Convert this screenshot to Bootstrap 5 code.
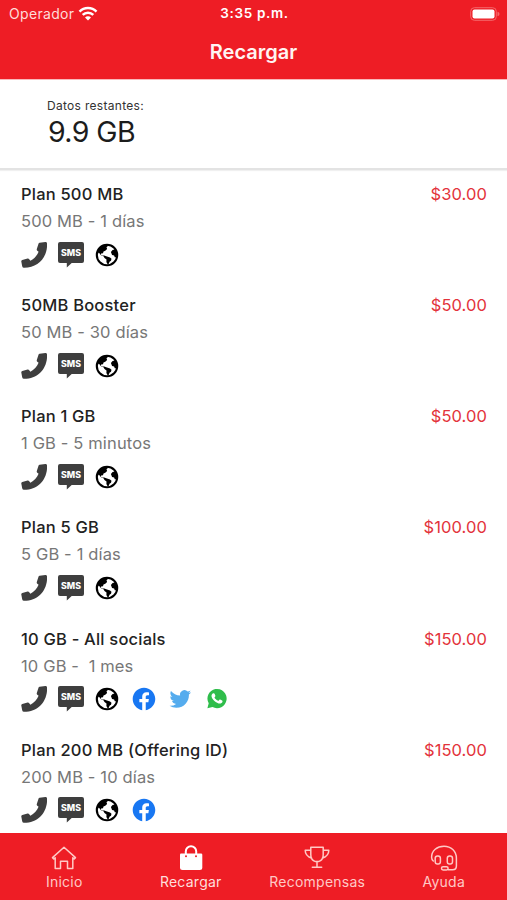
<!DOCTYPE html>
<html lang="es">
<head>
<meta charset="utf-8">
<meta name="viewport" content="width=device-width, initial-scale=1">
<title>Recargar</title>
<link href="https://cdn.jsdelivr.net/npm/bootstrap@5.3.0/dist/css/bootstrap.min.css" rel="stylesheet">
<style>
  body { font-family: Inter, "Liberation Sans", sans-serif; color: #222; height: 900px; overflow: hidden; background: #fff; }
  .brand-red { background: #ee1d25; }
  .top-area { height: 79px; box-shadow: 0 1px 0 #f9b9bb; }
  .status-row { height: 27px; font-size: 14px; padding: 0 7px 0 9px; }
  .status-row > * { flex: 1 1 0; }
  .operator { color: #ffdcd9; letter-spacing: .32px; }
  .clock { font-weight: 600; letter-spacing: .65px; font-size: 13.5px; }
  .page-title { font-size: 20px; font-weight: 600; line-height: 51px; letter-spacing: 0; color: #fff4f2; }
  .balance { height: 91px; padding: 20px 48px 0 47px; border-bottom: 2px solid #e3e3e3; box-shadow: 0 1px 1px #f0f0f0; }
  .balance-label { font-size: 12px; line-height: 14px; letter-spacing: .3px; color: #333; }
  .balance-value { font-size: 28.5px; line-height: 37px; letter-spacing: -.6px; color: #1c1c1c; padding-left: 1px; }
  .plans { height: 663px; padding-top: 11px; }
  .plan { height: 111.15px; padding: 0 20px 0 21px; }
  .plan-name, .plan-price, .plan-info { font-size: 16.5px; line-height: 27px; }
  .plan-name { font-weight: 500; letter-spacing: .2px; }
  .plan-price { color: #e3333b; letter-spacing: .08px; }
  .plan-info { color: #777; letter-spacing: .14px; white-space: pre; }
  .services { height: 39px; }
  .services svg { width: 26px; height: 26px; margin-right: 10.6px; }
  .tabs { height: 67px; padding: 10px 0 0 1px; }
  .tab { flex: 1 1 0; color: #ffc9c5; font-size: 14px; line-height: 18px; letter-spacing: .25px; text-decoration: none; }
  .tab svg { width: 30px; height: 30px; }
  .tab.current { color: #fff; }
  .tab.current span { color: #ffdfdc; }
</style>
</head>
<body>
<svg width="0" height="0" class="d-none" aria-hidden="true">
  <symbol id="phone" viewBox="0 0 26 26"><path fill="#3e3e3e" d="M18.600.8L24.400 0q1.500-.1 1.700 1.800C26.400 15.500 17 25.900 3 25.800q-1.500 0-1.800-1.500L.3 19.500q-.2-1.300 1-1.600l5.300-1.300q1-.2 1.600.6l1.200 1.500c3.600-1.800 6.600-5 8.200-8.900l-1.300-1.100q-.8-.7-.5-1.700l1.700-5.200q.3-.9 1.100-1z"/></symbol>
  <symbol id="sms" viewBox="0 0 26 26"><path fill="#3e3e3e" d="M2 0h22a2 2 0 0 1 2 2v17a2 2 0 0 1-2 2H13.700L8.800 25.400V21H2a2 2 0 0 1-2-2V2a2 2 0 0 1 2-2z"/><text x="3" y="13.500" textLength="20" lengthAdjust="spacingAndGlyphs" font-family="Inter, sans-serif" font-weight="800" font-size="8.800" fill="#fff">SMS</text></symbol>
  <symbol id="globe" viewBox="0 0 26 26"><circle cx="13" cy="13" r="10.200" fill="#fff" stroke="#000" stroke-width="2.100"/><path d="M3.200 9.500L6 5l3.500-2.200 3.500-.3 1.200 1.200-1.700 1.500.6 1.700-1.800 1.800-1.800.9-.5 1.700-1.900.3-.2 1.200 1.500.8 1.800-.2L13 14.500l3 .9 1.500 1.300-.5 2-1.500 1.100-.7 2-1.200.5-1.200-2.300.1-2.500-2-1.500-1-1.700-2.500-1-1.800-2.300-1.800-.5zM16.900 10l1.700-2 2.200-.5 1.500 1.500.6 3.500-.6 2.600-1.500.2-.7-1.900-2-.5z"/></symbol>
  <symbol id="facebook" viewBox="-1 -1.200 26 26"><circle cx="12" cy="12" r="10.500" fill="#fff"/><path fill="#1877f2" transform="translate(.7 .5) scale(.94)" d="M24 12.073c0-6.627-5.373-12-12-12s-12 5.373-12 12c0 5.990 4.388 10.954 10.125 11.854v-8.385H7.078v-3.470h3.047V9.430c0-3.007 1.792-4.669 4.533-4.669 1.312 0 2.686.235 2.686.235v2.953H15.830c-1.491 0-1.956.925-1.956 1.874v2.250h3.328l-.532 3.470h-2.796v8.385C19.612 23.027 24 18.062 24 12.073z"/></symbol>
  <symbol id="twitter" viewBox="-1.500 -1.500 28 28"><path fill="#55acee" transform="translate(1.200 .8) scale(.97)" d="M23.953 4.570a10 10 0 0 1-2.825.775 4.958 4.958 0 0 0 2.163-2.723c-.951.555-2.005.959-3.127 1.184a4.920 4.920 0 0 0-8.384 4.482C7.690 8.095 4.067 6.130 1.640 3.162a4.822 4.822 0 0 0-.666 2.475c0 1.710.870 3.213 2.188 4.096a4.904 4.904 0 0 1-2.228-.616v.06a4.923 4.923 0 0 0 3.946 4.827 4.996 4.996 0 0 1-2.212.085 4.936 4.936 0 0 0 4.604 3.417 9.867 9.867 0 0 1-6.102 2.105c-.39 0-.779-.023-1.170-.067a13.995 13.995 0 0 0 7.557 2.209c9.053 0 13.998-7.496 13.998-13.985 0-.21 0-.42-.015-.63A9.935 9.935 0 0 0 23.953 4.570z"/></symbol>
  <symbol id="whatsapp" viewBox="0 0 26 26"><path fill="#2fbd4b" d="M3.400 22.200l1.300-4.900A9.600 9.600 0 1 1 8.500 21z"/><path fill="#fff" d="M9.500 7.300c.6-.1.900 0 1.200.7l.7 1.700c.1.400 0 .7-.9 1.700-.1.300.2.700.8 1.400.9 1 1.800 1.600 2.800 2 .3.100.5 0 1.300-1.100.2-.3.500-.3.800-.2l1.900.9c.5.300.5.400.4 1-.2 1.400-1.500 2-2.700 2.100-1.500 0-3.700-.9-5.600-2.800-1.700-1.700-2.700-3.400-2.700-4.800 0-1.200.8-2.400 2-2.600z"/></symbol>
</svg>

<div class="d-flex flex-column h-100">
  <header class="top-area brand-red text-white flex-shrink-0 position-relative">
    <div class="status-row d-flex align-items-center">
      <div class="operator d-flex align-items-center">Operador
        <svg class="ms-1" width="20" height="16" viewBox="0 0 20 16" fill="none" stroke="#fff" stroke-width="2.500"><path d="M1.500 5.600a12 12 0 0 1 17 0M4.700 8.900a7.500 7.500 0 0 1 10.600 0"/><path d="M7 11.400a4.200 4.200 0 0 1 6 0L10 14.500z" fill="#fff" stroke="none"/></svg>
      </div>
      <div class="clock text-center text-nowrap">3:35 p.m.</div>
      <div class="text-end d-flex justify-content-end">
        <svg width="30" height="14" viewBox="0 0 30 14"><rect x=".7" y=".7" width="25.600" height="12.600" rx="3.700" fill="none" stroke="#f4686b" stroke-width="1"/><rect x="2.500" y="2.500" width="22" height="9" rx="2" fill="#fff"/><path d="M27.500 4.800q2 .5 2 2.200t-2 2.200z" fill="#f4686b"/></svg>
      </div>
    </div>
    <h1 class="page-title text-center m-0">Recargar</h1>
  </header>

  <section class="balance flex-shrink-0">
    <div class="balance-label">Datos restantes:</div>
    <div class="balance-value">9.9 GB</div>
  </section>

  <main class="plans overflow-hidden flex-shrink-0">
    <article class="plan">
      <div class="d-flex justify-content-between"><div class="plan-name">Plan 500 MB</div><div class="plan-price">$30.00</div></div>
      <div class="plan-info">500 MB - 1 días</div>
      <div class="services d-flex align-items-center"><svg><use href="#phone"/></svg><svg><use href="#sms"/></svg><svg><use href="#globe"/></svg></div>
    </article>
    <article class="plan">
      <div class="d-flex justify-content-between"><div class="plan-name">50MB Booster</div><div class="plan-price">$50.00</div></div>
      <div class="plan-info">50 MB - 30 días</div>
      <div class="services d-flex align-items-center"><svg><use href="#phone"/></svg><svg><use href="#sms"/></svg><svg><use href="#globe"/></svg></div>
    </article>
    <article class="plan">
      <div class="d-flex justify-content-between"><div class="plan-name">Plan 1 GB</div><div class="plan-price">$50.00</div></div>
      <div class="plan-info">1 GB - 5 minutos</div>
      <div class="services d-flex align-items-center"><svg><use href="#phone"/></svg><svg><use href="#sms"/></svg><svg><use href="#globe"/></svg></div>
    </article>
    <article class="plan">
      <div class="d-flex justify-content-between"><div class="plan-name">Plan 5 GB</div><div class="plan-price">$100.00</div></div>
      <div class="plan-info">5 GB - 1 días</div>
      <div class="services d-flex align-items-center"><svg><use href="#phone"/></svg><svg><use href="#sms"/></svg><svg><use href="#globe"/></svg></div>
    </article>
    <article class="plan">
      <div class="d-flex justify-content-between"><div class="plan-name">10 GB - All socials</div><div class="plan-price">$150.00</div></div>
      <div class="plan-info">10 GB -  1 mes</div>
      <div class="services d-flex align-items-center"><svg><use href="#phone"/></svg><svg><use href="#sms"/></svg><svg><use href="#globe"/></svg><svg><use href="#facebook"/></svg><svg><use href="#twitter"/></svg><svg><use href="#whatsapp"/></svg></div>
    </article>
    <article class="plan">
      <div class="d-flex justify-content-between"><div class="plan-name">Plan 200 MB (Offering ID)</div><div class="plan-price">$150.00</div></div>
      <div class="plan-info">200 MB - 10 días</div>
      <div class="services d-flex align-items-center"><svg><use href="#phone"/></svg><svg><use href="#sms"/></svg><svg><use href="#globe"/></svg><svg><use href="#facebook"/></svg></div>
    </article>
  </main>

  <nav class="tabs brand-red d-flex flex-shrink-0">
    <a class="tab d-flex flex-column align-items-center" href="#">
      <svg viewBox="0 0 30 30" fill="none" stroke="currentColor" stroke-width="1.500" stroke-linejoin="round" stroke-linecap="round"><path d="M3.500 14.600L15 4.300l11.500 10.300-1.300 1.300-1.400-1.100V25.500h-5.300v-7.300h-7v7.300H6.200V14.800l-1.400 1.100z"/></svg>
      <span>Inicio</span></a>
    <a class="tab current d-flex flex-column align-items-center" href="#">
      <svg viewBox="0 0 30 30"><path d="M9.800 12V8.500a5.200 5.200 0 0 1 10.400 0V12" fill="none" stroke="currentColor" stroke-width="2"/><path fill="currentColor" d="M5 10.500h20a1.300 1.300 0 0 1 1.300 1.300v12.700a2.500 2.500 0 0 1-2.500 2.500H6.500A2.500 2.500 0 0 1 4 24.500V11.500a1 1 0 0 1 1-1z"/><circle cx="10" cy="13.300" r="1" fill="#ee1d25"/><circle cx="20" cy="13.300" r="1" fill="#ee1d25"/></svg>
      <span>Recargar</span></a>
    <a class="tab d-flex flex-column align-items-center" href="#">
      <svg viewBox="0 0 30 30" fill="none" stroke="currentColor" stroke-width="1.500" stroke-linejoin="round" stroke-linecap="round"><path d="M8.800 4.200h12.400v7.600q0 5.400-4.700 6.800h-3q-4.700-1.400-4.700-6.800zM8.800 7.200H3.200q0 5.600 6.500 8M21.200 7.200h5.600q0 5.600-6.500 8M15 18.800v5M10.300 24.200h9.400"/></svg>
      <span>Recompensas</span></a>
    <a class="tab d-flex flex-column align-items-center" href="#">
      <svg viewBox="0 0 30 30" fill="none" stroke="currentColor" stroke-width="1.500" stroke-linecap="round"><path d="M4.300 18q-1.700-1.500-1.700-3.700C2.600 7.500 8 3.200 15 3.200S27.400 8 27.400 15.300V23q0 3.800-3.800 3.800h-4.400"/><rect x="6.200" y="13" width="5.200" height="8" rx="2.300"/><rect x="18.300" y="13" width="5.200" height="8" rx="2.300"/><rect x="12.500" y="23.700" width="6.600" height="3.200" rx="1.600"/></svg>
      <span>Ayuda</span></a>
  </nav>
</div>
<script src="https://cdn.jsdelivr.net/npm/bootstrap@5.3.0/dist/js/bootstrap.bundle.min.js"></script>
</body>
</html>
